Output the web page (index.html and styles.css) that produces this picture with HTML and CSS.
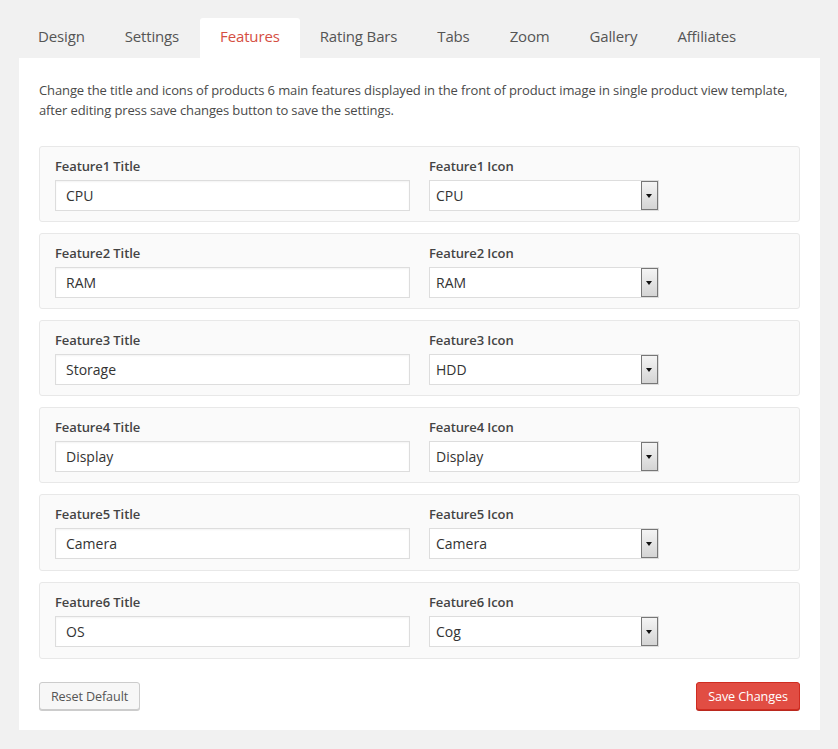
FILE: index.html
```html
<!DOCTYPE html>
<html>
<head>
<meta charset="utf-8">
<link rel="stylesheet" href="styles.css">
</head>
<body>
<div class="wrap">
  <nav class="tabs">
    <span class="tab">Design</span>
    <span class="tab">Settings</span>
    <span class="tab active">Features</span>
    <span class="tab">Rating Bars</span>
    <span class="tab">Tabs</span>
    <span class="tab">Zoom</span>
    <span class="tab">Gallery</span>
    <span class="tab">Affiliates</span>
  </nav>
  <div class="panel">
    <p class="desc">Change the title and icons of products 6 main features displayed in the front of product image in single product view template, after editing press save changes button to save the settings.</p>
    <div class="rows">
      <div class="row">
        <div class="field"><label>Feature1 Title</label><div class="input">CPU</div></div>
        <div class="field"><label>Feature1 Icon</label><div class="select"><span>CPU</span><i class="arrow"></i></div></div>
      </div>
      <div class="row">
        <div class="field"><label>Feature2 Title</label><div class="input">RAM</div></div>
        <div class="field"><label>Feature2 Icon</label><div class="select"><span>RAM</span><i class="arrow"></i></div></div>
      </div>
      <div class="row">
        <div class="field"><label>Feature3 Title</label><div class="input">Storage</div></div>
        <div class="field"><label>Feature3 Icon</label><div class="select"><span>HDD</span><i class="arrow"></i></div></div>
      </div>
      <div class="row">
        <div class="field"><label>Feature4 Title</label><div class="input">Display</div></div>
        <div class="field"><label>Feature4 Icon</label><div class="select"><span>Display</span><i class="arrow"></i></div></div>
      </div>
      <div class="row">
        <div class="field"><label>Feature5 Title</label><div class="input">Camera</div></div>
        <div class="field"><label>Feature5 Icon</label><div class="select"><span>Camera</span><i class="arrow"></i></div></div>
      </div>
      <div class="row">
        <div class="field"><label>Feature6 Title</label><div class="input">OS</div></div>
        <div class="field"><label>Feature6 Icon</label><div class="select"><span>Cog</span><i class="arrow"></i></div></div>
      </div>
    </div>
    <div class="actions">
      <button class="btn reset">Reset Default</button>
      <button class="btn save">Save Changes</button>
    </div>
  </div>
</div>
</body>
</html>
```
FILE: styles.css
```css
* { box-sizing: border-box; }
html, body { margin: 0; padding: 0; }
body {
  background: #f1f1f1;
  font-family: "Open Sans", "Noto Sans", sans-serif;
  font-size: 13px;
  color: #444;
  width: 838px;
  height: 749px;
}
.wrap { padding: 18px 18px 0 19px; }
.tabs { display: flex; height: 40px; }
.tab {
  padding: 0 20px;
  font-size: 15px;
  line-height: 37px;
  height: 40px;
  color: #555;
  letter-spacing: -0.15px;
  border-radius: 3px 3px 0 0;
}
.tab:first-child { padding-left: 19px; }
.tab.active { background: #fff; color: #d54e42; margin-left: 1px; }
.panel {
  background: #fff;
  width: 801px;
  height: 672px;
  padding: 22px 20px 0 20px;
}
.desc {
  margin: 0;
  line-height: 20px;
  color: #4a4a4a;
  font-size: 13px;
  letter-spacing: -0.12px;
}
.rows { margin-top: 26px; display: flex; flex-direction: column; gap: 11px; }
.row {
  display: flex;
  height: 76px;
  border: 1px solid #e8e8e8;
  border-radius: 3px;
  background: #fafafa;
  padding: 10px 0 0 15px;
}
.row:nth-child(n+5) { height: 77px; }
.field { display: flex; flex-direction: column; }
.field:first-child { width: 374px; }
.field label {
  font-weight: 600;
  color: #444;
  line-height: 18px;
  height: 23px;
  letter-spacing: -0.1px;
}
.input {
  width: 355px;
  height: 31px;
  border: 1px solid #ddd;
  background: #fff;
  padding: 0 10px;
  line-height: 29px;
  font-size: 14px;
  color: #333;
  box-shadow: inset 0 1px 2px rgba(0,0,0,0.05);
}
.select {
  width: 230px;
  height: 31px;
  border: 1px solid #ddd;
  background: #fff;
  display: flex;
  align-items: center;
  justify-content: space-between;
  padding-left: 6px;
  font-size: 14px;
  color: #333;
}
.arrow {
  width: 17px;
  height: 29px;
  border: 1px solid #777;
  background: linear-gradient(#f4f4f4, #d4d4d4);
  position: relative;
}
.arrow::after {
  content: "";
  position: absolute;
  left: 4px;
  top: 12px;
  border-left: 3.5px solid transparent;
  border-right: 3.5px solid transparent;
  border-top: 4px solid #111;
}
.actions {
  display: flex;
  justify-content: space-between;
  margin-top: 23px;
}
.btn {
  font-family: "Open Sans", "Noto Sans", sans-serif;
  font-size: 12.6px;
  letter-spacing: -0.1px;
  height: 28px;
  border-radius: 3px;
  padding: 0;
  white-space: nowrap;
  cursor: pointer;
}
.reset {
  background: #f7f7f7;
  border: 1px solid #ccc;
  color: #555;
  box-shadow: 0 1px 0 #ccc;
  width: 101px;
}
.save {
  background: #e14d43;
  border: 1px solid #d02c21;
  color: #fff;
  box-shadow: 0 1px 0 #ba281e;
  width: 104px;
}
```
